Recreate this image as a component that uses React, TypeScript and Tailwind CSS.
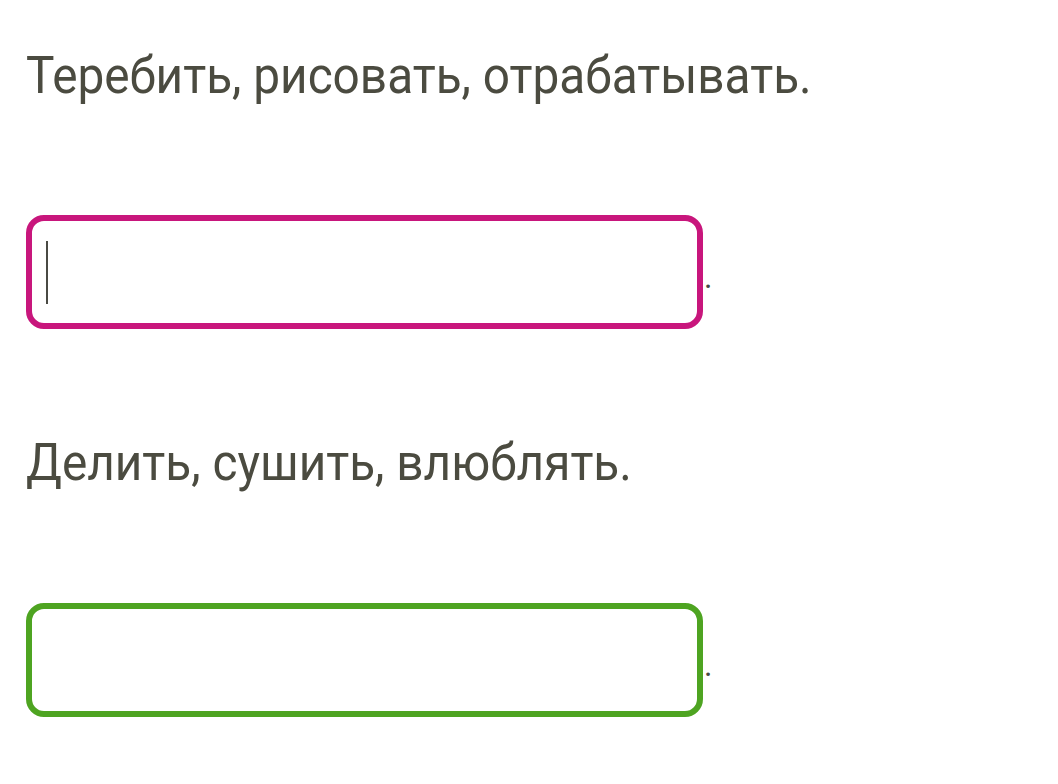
import React from "react";

type BlankProps = {
  color: "pink" | "green";
  withCaret?: boolean;
};

function Blank({ color, withCaret }: BlankProps) {
  const border = color === "pink" ? "border-[#c8167c]" : "border-[#4ea421]";
  return (
    <div className="flex items-end">
      <div
        className={`relative h-[114px] w-[677px] rounded-[18px] border-[6px] bg-white ${border}`}
      >
        {withCaret ? (
          <div className="absolute left-[14px] top-[20px] h-[63px] w-[2px] bg-[#4a4a44]" />
        ) : null}
      </div>
      <span className="mb-[36px] ml-[1px] text-[32px] leading-none text-[#4a4a44]">.</span>
    </div>
  );
}

export default function App() {
  return (
    <div
      className="min-h-[784px] w-[1058px] overflow-hidden bg-white pl-[26px] text-[#4b4b40]"
      style={{ fontFamily: "Roboto, 'Noto Sans', sans-serif" }}
    >
      <section className="pt-[44px]">
        <p className="origin-left scale-x-[0.918] whitespace-nowrap text-[52px] leading-[64px]">
          Теребить, рисовать, отрабатывать.
        </p>
        <div className="mt-[107px]">
          <Blank color="pink" withCaret />
        </div>
      </section>
      <section className="pt-[102px]">
        <p className="origin-left scale-x-[0.918] whitespace-nowrap text-[52px] leading-[64px]">
          Делить, сушить, влюблять.
        </p>
        <div className="mt-[108px]">
          <Blank color="green" />
        </div>
      </section>
    </div>
  );
}
